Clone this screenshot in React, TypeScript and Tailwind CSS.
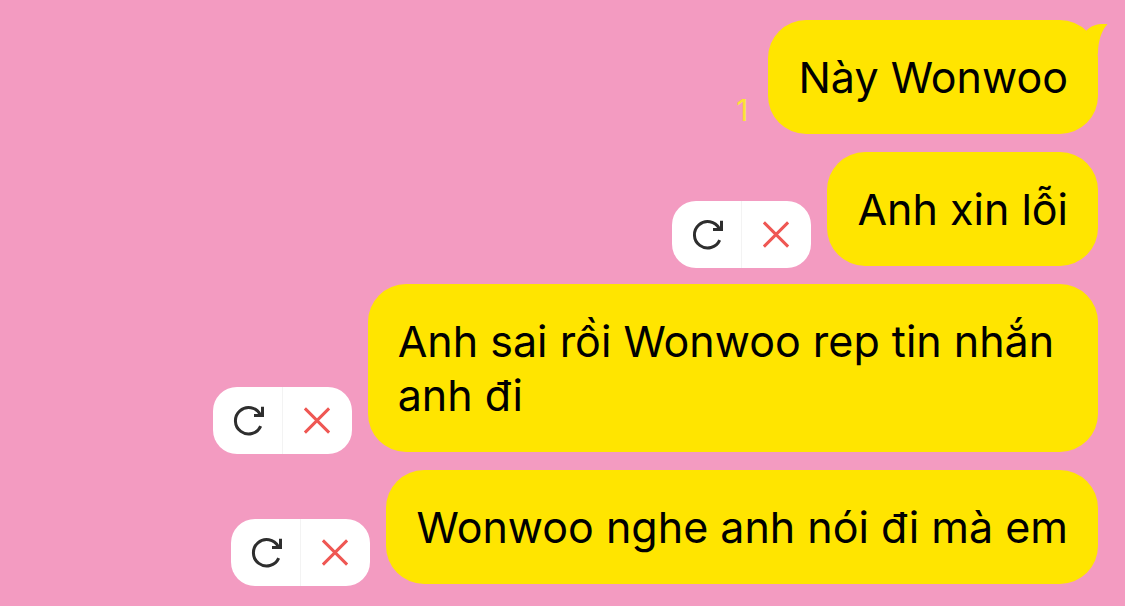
import React from 'react';

interface Message {
    id: number;
    text: string;
    failed: boolean;
    unread?: number;
}

const messages: Message[] = [
    { id: 1, text: 'Này Wonwoo', failed: false, unread: 1 },
    { id: 2, text: 'Anh xin lỗi', failed: true },
    { id: 3, text: 'Anh sai rồi Wonwoo rep tin nhắn anh đi', failed: true },
    { id: 4, text: 'Wonwoo nghe anh nói đi mà em', failed: true },
];

const RetryIcon = () => (
    <svg className="h-[33px] w-[33px]" viewBox="0 0 33 33" fill="none" stroke="#2e2e2e" strokeWidth="3" aria-hidden="true">
        <path d="M29.7 22.1A13.2 13.2 0 1 1 29.2 10.4" />
        <path d="M31.5 2.7V11.6H23" />
    </svg>
);

const DeleteIcon = () => (
    <svg className="h-[33px] w-[33px]" viewBox="0 0 33 33" fill="none" stroke="#ef5753" strokeWidth="3" aria-hidden="true">
        <path d="M3.9 4.4L28.1 28.6M28.1 4.4L3.9 28.6" />
    </svg>
);

// Shown next to a message that could not be sent
const FailedActions = () => (
    <div className="-mb-0.5 flex h-[67px] shrink-0 overflow-hidden rounded-3xl bg-white">
        <button type="button" aria-label="Retry" className="flex w-[70px] items-center justify-center border-r border-[#f3f3f3]">
            <RetryIcon />
        </button>
        <button type="button" aria-label="Delete" className="flex w-[69px] items-center justify-center">
            <DeleteIcon />
        </button>
    </div>
);

const BubbleTail = () => (
    <svg className="absolute top-1 -right-2.5 h-8 w-8" viewBox="0 0 32 32" fill="#ffe500" aria-hidden="true">
        <path d="M10 7C14 2.5 21 -1.2 31.5 0.3C26 6 22 16 22 30L8 20Z" />
    </svg>
);

const App: React.FC = () => {
    return (
        <main className="min-h-screen bg-[#f39bc1] py-5 pr-[27px] pl-6 font-['Inter','Noto_Sans',sans-serif]">
            <ul className="flex flex-col gap-[18px]">
                {messages.map((message, index) => (
                    <li key={message.id} className="flex items-end justify-end gap-4">
                        {message.failed && <FailedActions />}
                        {message.unread && (
                            <span className="mr-1 mb-1.5 text-[30px] leading-9 text-[#fbe335]">{message.unread}</span>
                        )}
                        <div className="relative max-w-[68%] rounded-[38px] bg-[#ffe500] px-[30px] py-[30px]">
                            {index === 0 && <BubbleTail />}
                            <p className="text-[43px] leading-[54px] text-black">{message.text}</p>
                        </div>
                    </li>
                ))}
            </ul>
        </main>
    );
};

export default App;
